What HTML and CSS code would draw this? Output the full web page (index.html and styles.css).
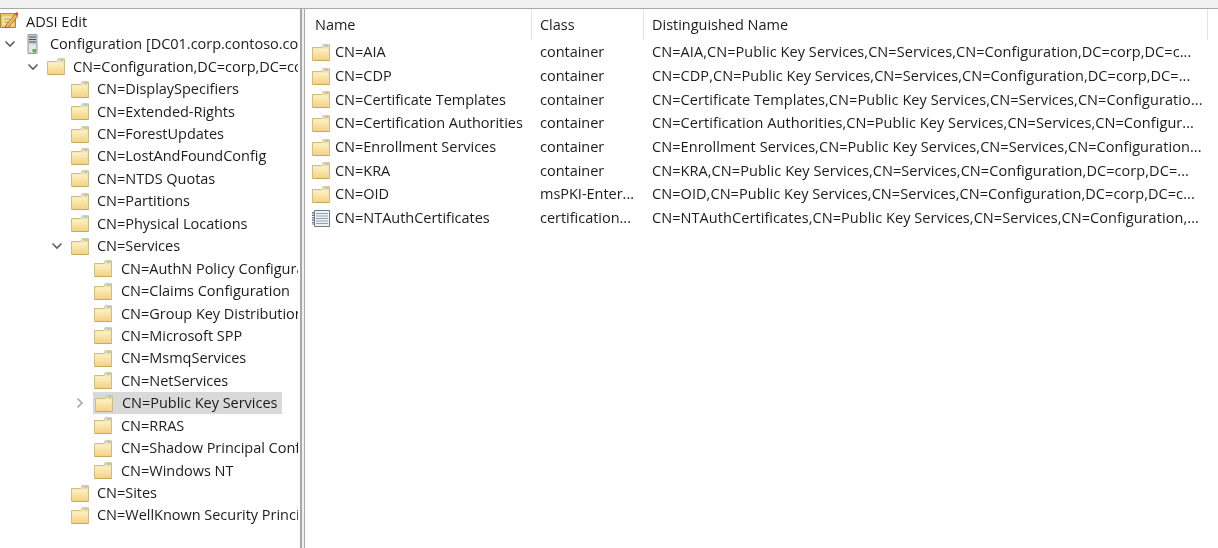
FILE: index.html
```html
<!DOCTYPE html>
<html lang="en">
<head>
<meta charset="utf-8">
<title>ADSI Edit</title>
<link rel="stylesheet" href="styles.css">
</head>
<body>
<svg class="defs" width="0" height="0" aria-hidden="true">
  <defs>
    <linearGradient id="fg" x1="0" y1="0" x2="0" y2="1"><stop offset="0" stop-color="#fdf1c4"/><stop offset="1" stop-color="#f3d285"/></linearGradient>
    <symbol id="folder" viewBox="0 0 18 17">
      <path d="M.5 3.500h9l1.500-1.500V.8h6.500v15.700H.5z" fill="#efe0b0" stroke="#d3bb85"/>
      <rect x="13" y="1.300" width="3.500" height="1.400" fill="#8fc3e8"/>
      <path d="M1 4.500h15.500v11.500H1z" fill="url(#fg)"/>
      <path d="M1 16.500h16.500" stroke="#c9a765"/>
    </symbol>
    <symbol id="chev-down" viewBox="0 0 12 8"><path d="M1.500 1.500 6 6l4.500-4.500" fill="none" stroke="#5f5f5f" stroke-width="1.600"/></symbol>
    <symbol id="chev-right" viewBox="0 0 8 12"><path d="M1.500 1.500 6 6l-4.500 4.500" fill="none" stroke="#a6a6a6" stroke-width="1.600"/></symbol>
  </defs>
</svg>
<div class="topbar"></div>
<main class="panes">
  <nav class="tree">
    <div class="row l0"><svg class="ico-root" viewBox="0 0 19 18"><path d="M.5 2.500h15v14H.5z" fill="#e6c766" stroke="#a98b3c"/><path d="M2.500 5.500h11v9h-11z" fill="#f5e7ad"/><path d="M4 8h6M4 11h4" stroke="#b59a50"/><path d="m6 14 9-11 3 2-9 11-4 1z" fill="#f0b25a" stroke="#8a5a2b" stroke-width=".7"/><path d="m15 3 1.500-2 2 1.500-1.500 2.500z" fill="#c9504a"/></svg><span>ADSI Edit</span></div>
    <div class="row l1"><svg class="chev" viewBox="0 0 12 8"><use href="#chev-down"/></svg><svg class="ico-server" viewBox="0 0 11 20"><path d="M1 .5h9v19H1z" fill="#c9ced2" stroke="#9aa1a6"/><path d="M2 3h7M2 5.500h7M2 8h7" stroke="#4d5458" stroke-width="1.200"/><path d="M2 10.500h7v8H2z" fill="#e4e7e9"/><rect x="5.500" y="15" width="3.500" height="3.500" fill="#5ab64a"/></svg><span>Configuration [DC01.corp.contoso.com]</span></div>
    <div class="row l2"><svg class="chev" viewBox="0 0 12 8"><use href="#chev-down"/></svg><svg class="ico"><use href="#folder"/></svg><span>CN=Configuration,DC=corp,DC=contoso,DC=com</span></div>
    <div class="row l3"><svg class="ico"><use href="#folder"/></svg><span>CN=DisplaySpecifiers</span></div>
    <div class="row l3"><svg class="ico"><use href="#folder"/></svg><span>CN=Extended-Rights</span></div>
    <div class="row l3"><svg class="ico"><use href="#folder"/></svg><span>CN=ForestUpdates</span></div>
    <div class="row l3"><svg class="ico"><use href="#folder"/></svg><span>CN=LostAndFoundConfig</span></div>
    <div class="row l3"><svg class="ico"><use href="#folder"/></svg><span>CN=NTDS Quotas</span></div>
    <div class="row l3"><svg class="ico"><use href="#folder"/></svg><span>CN=Partitions</span></div>
    <div class="row l3"><svg class="ico"><use href="#folder"/></svg><span>CN=Physical Locations</span></div>
    <div class="row l3x"><svg class="chev" viewBox="0 0 12 8"><use href="#chev-down"/></svg><svg class="ico"><use href="#folder"/></svg><span>CN=Services</span></div>
    <div class="row l4"><svg class="ico"><use href="#folder"/></svg><span>CN=AuthN Policy Configuration</span></div>
    <div class="row l4"><svg class="ico"><use href="#folder"/></svg><span>CN=Claims Configuration</span></div>
    <div class="row l4"><svg class="ico"><use href="#folder"/></svg><span>CN=Group Key Distribution Service</span></div>
    <div class="row l4"><svg class="ico"><use href="#folder"/></svg><span>CN=Microsoft SPP</span></div>
    <div class="row l4"><svg class="ico"><use href="#folder"/></svg><span>CN=MsmqServices</span></div>
    <div class="row l4"><svg class="ico"><use href="#folder"/></svg><span>CN=NetServices</span></div>
    <div class="row l4x"><svg class="chev-r" viewBox="0 0 8 12"><use href="#chev-right"/></svg><div class="selected"><svg class="ico"><use href="#folder"/></svg><span>CN=Public Key Services</span></div></div>
    <div class="row l4"><svg class="ico"><use href="#folder"/></svg><span>CN=RRAS</span></div>
    <div class="row l4"><svg class="ico"><use href="#folder"/></svg><span>CN=Shadow Principal Configuration</span></div>
    <div class="row l4"><svg class="ico"><use href="#folder"/></svg><span>CN=Windows NT</span></div>
    <div class="row l3"><svg class="ico"><use href="#folder"/></svg><span>CN=Sites</span></div>
    <div class="row l3"><svg class="ico"><use href="#folder"/></svg><span>CN=WellKnown Security Principals</span></div>
  </nav>
  <div class="splitter"></div>
  <section class="list">
    <div class="head">
      <div class="hcell c-name">Name</div>
      <div class="hcell c-class">Class</div>
      <div class="hcell c-dn">Distinguished Name</div>
    </div>
    <div class="item"><div class="c-name"><svg class="ico"><use href="#folder"/></svg><span>CN=AIA</span></div><div class="c-class">container</div><div class="c-dn">CN=AIA,CN=Public Key Services,CN=Services,CN=Configuration,DC=corp,DC=c...</div></div>
    <div class="item"><div class="c-name"><svg class="ico"><use href="#folder"/></svg><span>CN=CDP</span></div><div class="c-class">container</div><div class="c-dn">CN=CDP,CN=Public Key Services,CN=Services,CN=Configuration,DC=corp,DC=...</div></div>
    <div class="item"><div class="c-name"><svg class="ico"><use href="#folder"/></svg><span>CN=Certificate Templates</span></div><div class="c-class">container</div><div class="c-dn">CN=Certificate Templates,CN=Public Key Services,CN=Services,CN=Configuratio...</div></div>
    <div class="item"><div class="c-name"><svg class="ico"><use href="#folder"/></svg><span>CN=Certification Authorities</span></div><div class="c-class">container</div><div class="c-dn">CN=Certification Authorities,CN=Public Key Services,CN=Services,CN=Configur...</div></div>
    <div class="item"><div class="c-name"><svg class="ico"><use href="#folder"/></svg><span>CN=Enrollment Services</span></div><div class="c-class">container</div><div class="c-dn">CN=Enrollment Services,CN=Public Key Services,CN=Services,CN=Configuration...</div></div>
    <div class="item"><div class="c-name"><svg class="ico"><use href="#folder"/></svg><span>CN=KRA</span></div><div class="c-class">container</div><div class="c-dn">CN=KRA,CN=Public Key Services,CN=Services,CN=Configuration,DC=corp,DC=...</div></div>
    <div class="item"><div class="c-name"><svg class="ico"><use href="#folder"/></svg><span>CN=OID</span></div><div class="c-class">msPKI-Enter...</div><div class="c-dn">CN=OID,CN=Public Key Services,CN=Services,CN=Configuration,DC=corp,DC=c...</div></div>
    <div class="item"><div class="c-name"><svg class="ico" viewBox="0 0 18 17"><path d="M2.500.5h15v16h-15z" fill="#eef2f6" stroke="#6f7c88"/><path d="M1 2v13" stroke="#6f7c88" stroke-width="2" stroke-dasharray="1.500 1"/><path d="M4 3.500h12M4 6h12M4 8.500h12M4 11h12M4 13.500h12" stroke="#8ea3b8"/></svg><span>CN=NTAuthCertificates</span></div><div class="c-class">certification...</div><div class="c-dn">CN=NTAuthCertificates,CN=Public Key Services,CN=Services,CN=Configuration,...</div></div>
  </section>
</main>
</body>
</html>
```
FILE: styles.css
```css
* { box-sizing: border-box; }
html, body { margin: 0; height: 100%; overflow: hidden; background: #fff; }
body {
  font-family: "Open Sans", "Noto Sans", sans-serif;
  font-size: 14.5px;
  line-height: 18px;
  letter-spacing: -0.02px;
  color: #1c1c1c;
  display: flex;
  flex-direction: column;
}
.defs { position: absolute; }
.topbar { height: 8px; background: #f0f0f0; border-bottom: 1px solid #a9a9a9; flex: none; box-sizing: content-box; }
.panes { flex: 1; display: flex; min-height: 0; filter: blur(0.3px); }

.tree { width: 300px; flex: none; overflow: hidden; padding: 1.6px 2px 0 0; }
.row { height: 22.45px; display: flex; align-items: center; white-space: nowrap; overflow: hidden; }
.row span { margin-left: 8px; }
.l0 span { margin-left: 7px; }
.ico-root { width: 19px; height: 18px; flex: none; margin-top: -3px; }
.ico-server { width: 11px; height: 20px; flex: none; margin-left: 11px; }
.l1 span { margin-left: 12px; }
.chev { width: 12px; height: 8px; flex: none; }
.chev-r { width: 8px; height: 12px; flex: none; margin-right: 9px; }
.ico { width: 18px; height: 17px; flex: none; }
.l1 { padding-left: 4px; }
.l2 { padding-left: 27px; }
.l2 .ico { margin-left: 8px; }
.l3 { padding-left: 71px; }
.l3x { padding-left: 51px; }
.l3x .ico { margin-left: 8px; }
.l4 { padding-left: 94px; }
.l4 span, .l4x span { margin-left: 9px; }
.l4x { padding-left: 76px; }
.selected { display: flex; align-items: center; width: 189px; height: 22px; background: #d9d9d9; padding-left: 2px; flex: none; }

.splitter { width: 5px; flex: none; background: #f0f0f0; border-left: 2px solid #a8a8a8; border-right: 1px solid #a8a8a8; }
.list { flex: 1; min-width: 0; overflow: hidden; }
.head { height: 31.5px; display: flex; }
.hcell { height: 31px; display: flex; align-items: center; border-right: 1px solid #e5e5e5; }
.c-name { width: 227px; padding-left: 9px; flex: none; display: flex; align-items: center; }
.c-class { width: 112px; padding-left: 8px; flex: none; }
.c-dn { width: 564px; padding-left: 8px; flex: none; white-space: nowrap; overflow: hidden; }
.item .c-dn { letter-spacing: 0.07px; }
.item { height: 23.7px; display: flex; align-items: center; white-space: nowrap; }
.item .c-name { padding-left: 7px; }
.item .c-name span { margin-left: 5px; }
.head .c-name { padding-left: 10px; }
```
